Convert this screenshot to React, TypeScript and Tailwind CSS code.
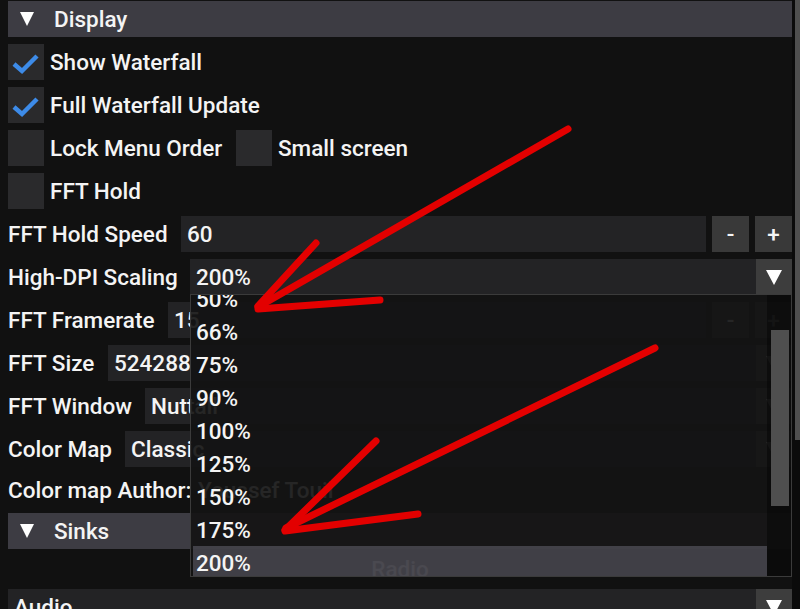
import React from "react";

function Tri({ w = 16, h = 15 }: { w?: number; h?: number }) {
  return (
    <svg width={w} height={h} viewBox={`0 0 ${w} ${h}`} className="shrink-0">
      <polygon points={`0,0 ${w},0 ${w / 2},${h}`} fill="#ffffff" />
    </svg>
  );
}

function Header({ label }: { label: string }) {
  return (
    <div className="h-[36px] shrink-0 bg-[#3d3c43] flex items-center">
      <div className="ml-[12px] flex items-center">
        <Tri w={14} h={14} />
      </div>
      <span className="ml-[20px] pt-[1px]">{label}</span>
    </div>
  );
}

function Checkbox({ checked }: { checked?: boolean }) {
  return (
    <div className="w-[36px] h-[36px] shrink-0 bg-[#2a2a2c]">
      {checked && (
        <svg width="36" height="36" viewBox="0 0 36 36">
          <polyline
            points="6,20 14,27 29,12"
            fill="none"
            stroke="#3d8be8"
            strokeWidth="4.5"
            strokeLinecap="butt"
            strokeLinejoin="miter"
          />
        </svg>
      )}
    </div>
  );
}

function CheckRow({ checked, label }: { checked?: boolean; label: string }) {
  return (
    <div className="h-[36px] shrink-0 flex items-center">
      <Checkbox checked={checked} />
      <span className="ml-[6px] pt-[1px]">{label}</span>
    </div>
  );
}

function StepButton({ glyph }: { glyph: string }) {
  return (
    <div className="w-[37px] h-full ml-[6px] bg-[#393939] flex items-center justify-center">
      {glyph}
    </div>
  );
}

function InputRow({ label, labelClass, value }: { label: string; labelClass: string; value: string }) {
  return (
    <div className="h-[36px] shrink-0 flex items-center">
      <span className={`${labelClass} shrink-0 whitespace-nowrap pt-[1px]`}>{label}</span>
      <div className="flex-1 h-full bg-[#232325] flex items-center pl-[6px] pt-[1px]">{value}</div>
      <StepButton glyph="-" />
      <StepButton glyph="+" />
    </div>
  );
}

function Combo({ value }: { value: string }) {
  return (
    <div className="flex-1 h-full flex bg-[#232325]">
      <div className="flex-1 flex items-center pl-[6px] pt-[1px] overflow-hidden whitespace-nowrap">{value}</div>
      <div className="w-[36px] h-full bg-[#3d3d3d] flex items-center justify-center">
        <Tri />
      </div>
    </div>
  );
}

function ComboRow({ label, labelClass, value }: { label: string; labelClass: string; value: string }) {
  return (
    <div className="h-[36px] shrink-0 flex items-center">
      <span className={`${labelClass} shrink-0 whitespace-nowrap pt-[1px]`}>{label}</span>
      <Combo value={value} />
    </div>
  );
}

const items = ["50%", "66%", "75%", "90%", "100%", "125%", "150%", "175%", "200%"];

export default function App() {
  return (
    <div className="w-[800px] h-[609px] bg-[#111111] relative overflow-hidden flex text-[22.5px] font-medium text-[#f4f4f4] font-['Roboto',sans-serif] leading-none">
      <div className="flex-1 pl-[8px] pt-[1px] flex flex-col gap-[7px]">
        <Header label="Display" />
        <CheckRow checked label="Show Waterfall" />
        <CheckRow checked label="Full Waterfall Update" />
        <div className="h-[36px] shrink-0 flex items-center">
          <Checkbox />
          <span className="ml-[6px] w-[186px] pt-[1px] whitespace-nowrap">Lock Menu Order</span>
          <Checkbox />
          <span className="ml-[6px] pt-[1px]">Small screen</span>
        </div>
        <CheckRow label="FFT Hold" />
        <InputRow label="FFT Hold Speed" labelClass="w-[173px]" value="60" />
        <ComboRow label="High-DPI Scaling" labelClass="w-[182px]" value="200%" />
        <InputRow label="FFT Framerate" labelClass="w-[160px]" value="15" />
        <ComboRow label="FFT Size" labelClass="w-[100px]" value="524288" />
        <ComboRow label="FFT Window" labelClass="w-[137px]" value="Nuttall" />
        <ComboRow label="Color Map" labelClass="w-[117px]" value="Classic" />
        <div className="h-[32px] shrink-0 flex items-center">
          <span className="w-[190px] shrink-0 whitespace-nowrap">Color map Author:</span>
          <span>Youssef Touil</span>
        </div>
        <Header label="Sinks" />
        <div className="h-[26px] shrink-0 flex items-center justify-center">Radio</div>
        <div className="h-[36px] shrink-0 flex items-center">
          <Combo value="Audio" />
        </div>
      </div>

      <div className="w-[8px] h-full bg-[#0b0b0b] pl-[3px] flex flex-col">
        <div className="h-[440px] bg-[#4f4f4f]" />
      </div>

      {/* dropdown popup */}
      <div className="absolute left-[190px] top-[294px] w-[602px] h-[283px] border border-[#3b3b3b] bg-[rgba(20,20,20,0.92)] flex overflow-hidden">
        <div className="flex-1 pl-[2px] overflow-hidden">
          <div className="flex flex-col -mt-[13px]">
            {items.map((it) => (
              <div
                key={it}
                className={`h-[33px] shrink-0 flex items-center pl-[3px] pt-[1px] ${
                  it === "200%" ? "bg-[rgba(110,108,122,0.5)]" : ""
                }`}
              >
                {it}
              </div>
            ))}
          </div>
        </div>
        <div className="w-[24px] h-full bg-[rgba(5,5,5,0.53)] pt-[35px] pl-[4px] pr-[2px]">
          <div className="h-[176px] bg-[#4f4f4f]" />
        </div>
      </div>

      {/* red annotation arrows */}
      <svg className="absolute left-0 top-0 pointer-events-none" width="800" height="609" viewBox="0 0 800 609">
        <g stroke="#e30000" strokeWidth="7" strokeLinecap="round" strokeLinejoin="round" fill="none">
          <line x1="568" y1="129" x2="258" y2="307" />
          <line x1="316" y1="243" x2="258" y2="306" />
          <line x1="258" y1="309" x2="380" y2="300" />
          <line x1="655" y1="348" x2="286" y2="528" />
          <line x1="376" y1="441" x2="285" y2="530" />
          <line x1="285" y1="531" x2="418" y2="514" />
        </g>
      </svg>
    </div>
  );
}
